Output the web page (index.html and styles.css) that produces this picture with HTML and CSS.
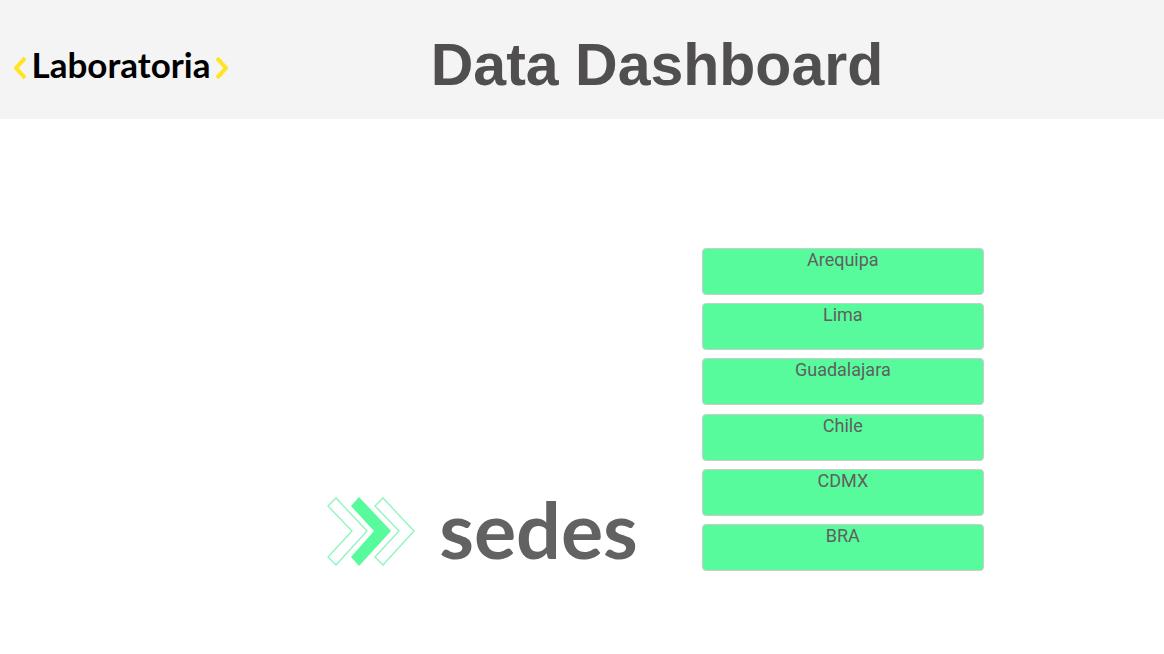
FILE: index.html
```html
<!DOCTYPE html>
<html lang="es">
<head>
<meta charset="utf-8">
<title>Data Dashboard</title>
<meta name="viewport" content="width=device-width, initial-scale=1">
<link rel="stylesheet" href="styles.css">
</head>
<body>
<header class="header">
  <div class="logo">
    <svg class="logo-bracket" viewBox="0 0 12 22" aria-hidden="true"><path d="M11 1 2 11l9 10"/></svg>
    <span class="logo-name">Laboratoria</span>
    <svg class="logo-bracket" viewBox="0 0 12 22" aria-hidden="true"><path d="m1 1 9 10-9 10"/></svg>
  </div>
  <h1 class="title">Data Dashboard</h1>
</header>
<main class="main">
  <div class="brand">
    <svg class="arrows" viewBox="0 0 88 69" aria-hidden="true">
      <path class="arrow-line" d="M1 9 9 1l31 33L9 68l-8-8 24-26z"/>
      <path class="arrow-fill" d="M24 9 32 0l32 34-32 35-8-9 23-26z"/>
      <path class="arrow-line" d="m48 9 8-8 31 33-31 34-8-8 24-26z"/>
    </svg>
    <h2 class="brand-name">sedes</h2>
  </div>
  <nav class="sites" aria-label="Sedes">
    <button class="site" type="button">Arequipa</button>
    <button class="site" type="button">Lima</button>
    <button class="site" type="button">Guadalajara</button>
    <button class="site" type="button">Chile</button>
    <button class="site" type="button">CDMX</button>
    <button class="site" type="button">BRA</button>
  </nav>
</main>
</body>
</html>
```
FILE: styles.css
```css
* {
  box-sizing: border-box;
}

body {
  margin: 0;
  background: #fff;
  color: #504e4f;
  font-family: "Liberation Sans", Arial, sans-serif;
}

.header {
  display: flex;
  align-items: center;
  min-height: 119px;
  padding: 0 78px 0 14px;
  background: #f4f4f4;
}

.logo {
  display: flex;
  align-items: center;
  justify-content: space-between;
  min-width: 214px;
  padding-top: 16px;
}

.logo-bracket {
  width: 12px;
  height: 22px;
  fill: none;
  stroke: #ffe521;
  stroke-width: 4;
}

.logo-name {
  color: #000;
  font-family: Lato, sans-serif;
  font-size: 35px;
  font-weight: 700;
  line-height: 40px;
  padding-bottom: 8px;
}

.title {
  flex: 1;
  margin: 0;
  padding-top: 10px;
  font-size: 59px;
  line-height: 64px;
  text-align: center;
}

.main {
  display: flex;
  justify-content: center;
  align-items: flex-end;
  gap: 64px;
  padding: 129px 0 80px 147px;
}

.brand {
  display: flex;
  align-items: center;
  gap: 24px;
}

.arrows {
  width: 88px;
  height: 69px;
}

.arrow-line {
  fill: none;
  stroke: #8df5ba;
  stroke-width: 1.3;
}

.arrow-fill {
  fill: #58fb9b;
}

.brand-name {
  margin: 0;
  padding-bottom: 4px;
  color: #626262;
  font-family: Lato, sans-serif;
  font-size: 79px;
  font-weight: 700;
  line-height: 76px;
}

.sites {
  display: flex;
  flex-direction: column;
  justify-content: space-between;
  gap: 8px;
  width: 282px;
  min-height: 323px;
}

.site {
  display: flex;
  justify-content: center;
  align-items: flex-start;
  min-height: 47px;
  padding: 0;
  border: 1px solid #ccc;
  border-radius: 4px;
  background: #58fb9b;
  color: #5f5f5f;
  font-family: Roboto, sans-serif;
  font-size: 18px;
  line-height: 22px;
}
```
